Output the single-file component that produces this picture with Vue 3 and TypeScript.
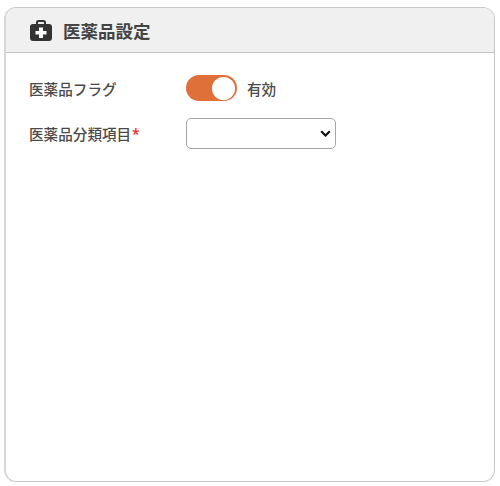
<script setup lang="ts">
const title = "医薬品設定";
</script>

<template>
  <div class="page">
    <section class="card">
      <header class="head">
        <svg class="icon" width="22" height="21" viewBox="0 0 22 21" aria-hidden="true">
          <path d="M7 5V2.500A1.500 1.500 0 0 1 8.500 1h5A1.500 1.500 0 0 1 15 2.500V5" fill="none" stroke="#333" stroke-width="2"/>
          <rect x="0" y="4" width="22" height="17" rx="3" fill="#333"/>
          <path d="M9 7.500h4v3.500h3.500v3.500H13V18H9v-3.500H5.500V11H9z" fill="#fff"/>
        </svg>
        <h2 class="title">{{ title }}</h2>
      </header>
      <div class="body">
        <div class="row first">
          <label class="label">医薬品フラグ</label>
          <div class="control">
            <span class="toggle"><span class="knob"></span></span>
            <span class="state">有効</span>
          </div>
        </div>
        <div class="row second">
          <label class="label">医薬品分類項目<span class="req">*</span></label>
          <div class="select-wrap">
            <select class="select"><option></option></select>
            <svg class="chevron" width="11" height="7" viewBox="0 0 11 7" aria-hidden="true">
              <path d="M1.200 1.300 5.500 5.500 9.800 1.300" fill="none" stroke="#111" stroke-width="2.200"/>
            </svg>
          </div>
        </div>
      </div>
    </section>
  </div>
</template>

<style>
html, body { margin: 0; background: #fff; }
</style>

<style scoped>
.page {
  width: 500px;
  height: 486px;
  box-sizing: border-box;
  padding: 7px 5px 4px 4px;
  font-family: "Roboto", "Noto Sans CJK JP", sans-serif;
  color: #444;
}
.card {
  height: 100%;
  box-sizing: border-box;
  border: 1px solid #c8c8c8;
  border-left: 2px solid #d8d8d8;
  border-radius: 12px;
  overflow: hidden;
  display: flex;
  flex-direction: column;
}
.head {
  height: 45px;
  flex: none;
  box-sizing: border-box;
  background: #f0f0f0;
  border-bottom: 1px solid #c4c4c4;
  display: flex;
  align-items: center;
  padding-left: 24px;
  gap: 11px;
}
.icon { flex: none; margin-top: 1px; }
.title {
  margin: 0;
  font-size: 17.500px;
  font-weight: 700;
  color: #444;
}
.body {
  padding: 0 0 0 23px;
}
.row { display: flex; align-items: center; }
.first { margin-top: 22px; height: 26px; }
.second { margin-top: 16px; height: 32px; }
.label { width: 157px; flex: none; font-size: 14.600px; font-weight: 500; color: #4a4a4a; }
.req { color: #f03030; font-size: 16px; margin-left: 1px; }
.control { display: flex; align-items: center; gap: 10px; }
.toggle {
  width: 51px;
  height: 26px;
  border-radius: 13px;
  background: #e0703a;
  position: relative;
  display: block;
}
.knob {
  position: absolute;
  top: 1.500px;
  right: 2px;
  width: 23px;
  height: 23px;
  border-radius: 50%;
  background: #fff;
}
.state { font-size: 14.600px; font-weight: 500; color: #4a4a4a; }
.select-wrap { position: relative; width: 150px; height: 31px; }
.select {
  appearance: none;
  display: block;
  width: 100%;
  height: 100%;
  box-sizing: border-box;
  border: 1px solid #a5a5a5;
  border-radius: 5px;
  background: #fff;
}
.chevron {
  position: absolute;
  right: 5px;
  top: 12px;
  pointer-events: none;
}
</style>
